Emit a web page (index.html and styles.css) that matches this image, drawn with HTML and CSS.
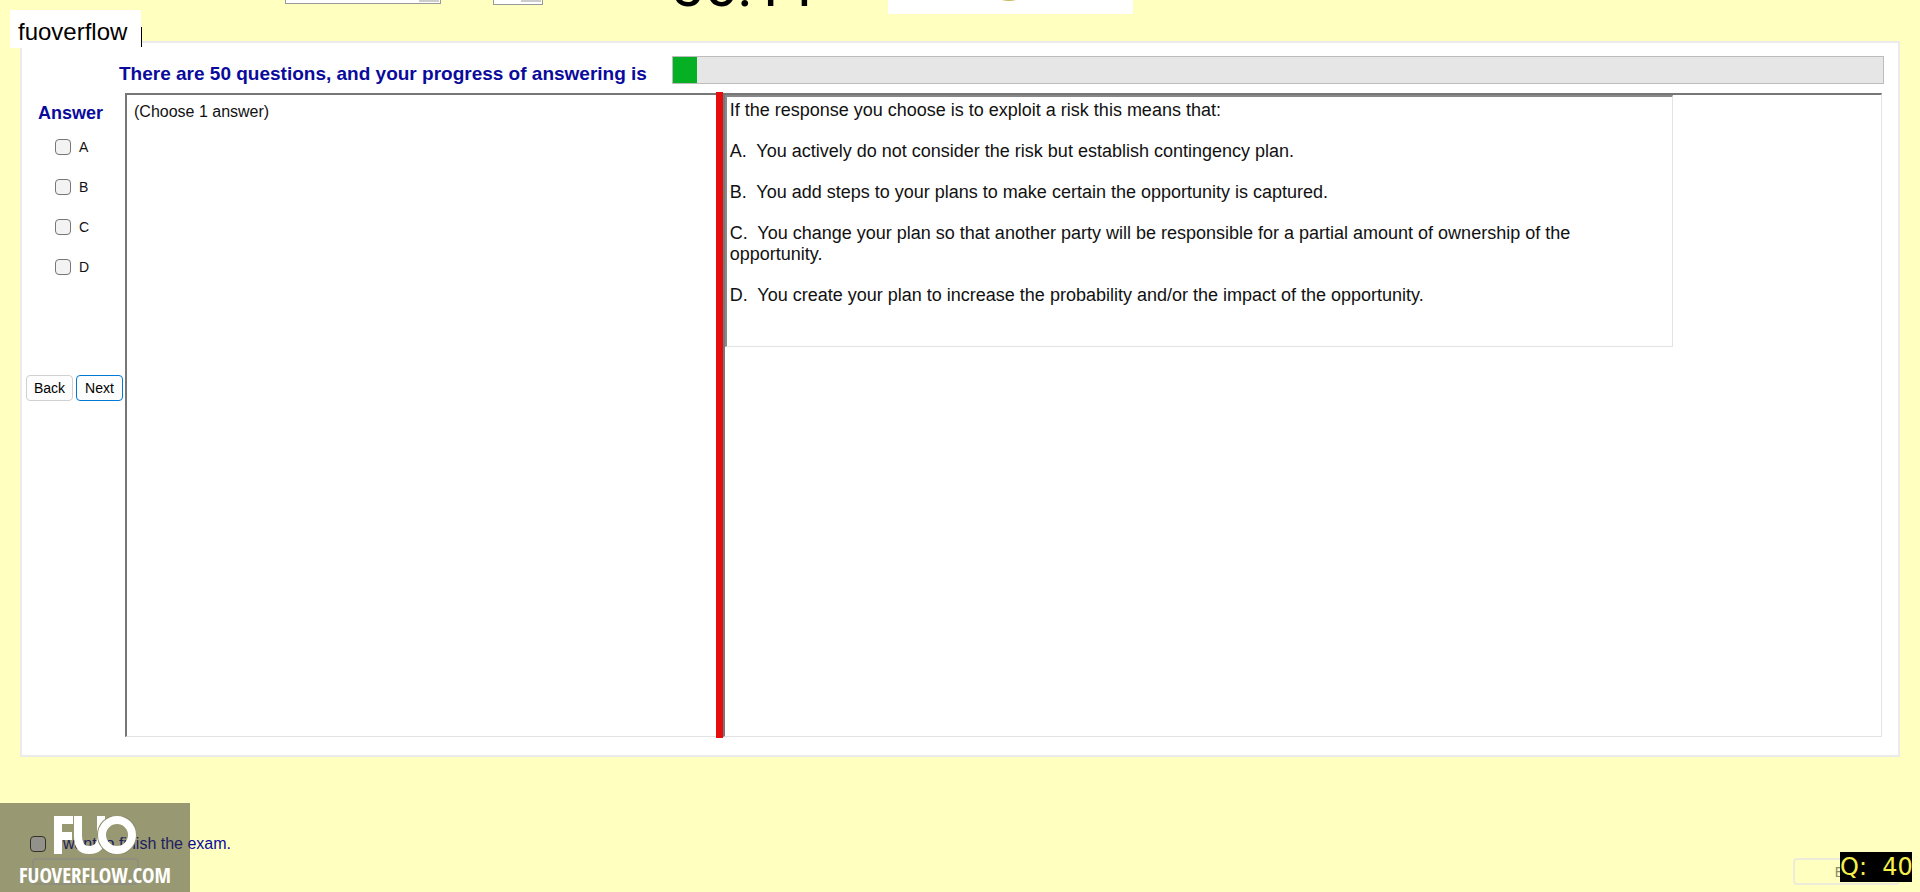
FILE: index.html
```html
<!DOCTYPE html>
<html lang="en">
<head>
  <meta charset="UTF-8">
  <title>Exam</title>
  <link rel="stylesheet" href="styles.css">
</head>
<body>

  <!-- HEADER (scrolled off, only its lower edge shows) -->
  <header class="top-bar">
    <select class="font-select" aria-label="Font"><option></option></select>
    <select class="size-select" aria-label="Size"><option></option></select>
    <div class="timer"><span>56:11</span></div>
    <div class="logo-box">
      <svg width="36" height="4" viewBox="0 0 36 4"><ellipse cx="16" cy="-9" rx="16" ry="10" fill="#c9b95c"/></svg>
    </div>
  </header>

  <!-- EXAM PANEL -->
  <main class="panel">
    <div class="progress-row">
      <span class="progress-label" id="progressLabel">There are 50 questions, and your progress of answering is</span>
      <div class="progress" role="progressbar" aria-labelledby="progressLabel" aria-valuenow="2" aria-valuemin="0" aria-valuemax="100">
        <div class="progress-fill" style="width: 2%"></div>
      </div>
    </div>

    <div class="exam">
      <form class="answers">
        <h2>Answer</h2>
        <label><input type="checkbox" name="answer" value="A">A</label>
        <label><input type="checkbox" name="answer" value="B">B</label>
        <label><input type="checkbox" name="answer" value="C">C</label>
        <label><input type="checkbox" name="answer" value="D">D</label>
        <div class="nav">
          <button type="button">Back</button>
          <button type="button" class="next">Next</button>
        </div>
      </form>

      <section class="choose">(Choose 1 answer)</section>
      <div class="splitter"></div>
      <section class="question">
        <div class="question-text">
          <p>If the response you choose is to exploit a risk this means that:</p>
          <p>A.&nbsp; You actively do not consider the risk but establish contingency plan.</p>
          <p>B.&nbsp; You add steps to your plans to make certain the opportunity is captured.</p>
          <p>C.&nbsp; You change your plan so that another party will be responsible for a partial amount of ownership of the opportunity.</p>
          <p>D.&nbsp; You create your plan to increase the probability and/or the impact of the opportunity.</p>
        </div>
      </section>
    </div>
  </main>

  <!-- FOOTER -->
  <footer class="bottom-bar">
    <div class="finish">
      <label><input type="checkbox" name="finish">I want to finish the exam.</label>
      <button type="button" class="finish-btn" aria-label="Finish" disabled></button>
    </div>
    <button type="button" class="exit-btn" disabled>Exit</button>
  </footer>

  <!-- OVERLAYS -->
  <div class="name-tag">fuoverflow</div>
  <div class="watermark">
    <svg width="82" height="38" viewBox="0 0 82 38" fill="none" stroke="#fff" stroke-width="8">
      <path d="M4 38V4H19M4 20H18"/>
      <path d="M24 0V20Q24 34 35 34Q47 34 47 22V0"/>
      <circle cx="63" cy="19" r="19" stroke="#8b8b68" stroke-width="2"/>
      <circle cx="63" cy="19" r="15"/>
    </svg>
    <span>FUOVERFLOW.COM</span>
  </div>
  <div class="counter">Q:&nbsp; 40</div>

</body>
</html>
```
FILE: styles.css
```css
* {
  box-sizing: border-box;
}

body {
  margin: 0;
  min-height: 100vh;
  display: flex;
  flex-direction: column;
  position: relative;
  overflow: hidden;
  background: #ffffc0;
  color: #111;
  font-family: "Liberation Sans", Arial, sans-serif;
  font-size: 16px;
}

input[type="checkbox"] {
  appearance: none;
  width: 16px;
  height: 16px;
  margin: 0;
  background: #f3f3f3;
  border: 1px solid #777;
  border-radius: 4px;
}

/* header */
.top-bar {
  display: flex;
  align-items: flex-start;
  height: 41px;
  padding-left: 285px;
}

.top-bar select {
  appearance: none;
  border: 1px solid #999;
  border-top: none;
  border-radius: 0;
  background: linear-gradient(#ccc, #ccc) right 1px top / 20px 2px no-repeat #fff;
}

.font-select {
  width: 156px;
  height: 4px;
}

.size-select {
  width: 50px;
  height: 5px;
  margin-left: 52px;
}

.timer {
  display: flex;
  align-items: flex-end;
  width: 154px;
  height: 20px;
  margin-left: 127px;
  overflow: hidden;
  color: #000;
  font-family: Roboto, sans-serif;
  font-size: 60px;
  line-height: 68px;
}

.logo-box {
  display: flex;
  justify-content: center;
  width: 245px;
  height: 14px;
  margin-left: 64px;
  background: #fff;
}

/* exam panel */
.panel {
  display: flex;
  flex: 1;
  flex-direction: column;
  margin: 0 20px;
  padding: 13px 14px 18px 4px;
  background: #fff;
  border: 2px solid #ebebeb;
}

.progress-row {
  display: flex;
  gap: 20px;
  margin-left: 93px;
}

.progress-label {
  width: 533px;
  padding-top: 8px;
  color: #0a0a9c;
  font-size: 19px;
  font-weight: bold;
  line-height: 20px;
  white-space: nowrap;
}

.progress {
  flex: 1;
  height: 28px;
  background: #e6e6e6;
  border: 1px solid #bcbcbc;
}

.progress-fill {
  height: 100%;
  background: #06b025;
}

.exam {
  display: grid;
  flex: 1;
  grid-template-columns: 99px 590fr 7px 1158fr;
  margin: 9px 2px 0 0;
}

.answers {
  display: flex;
  flex-direction: column;
}

.answers h2 {
  margin: 10px 0 14px 12px;
  color: #0a0a9c;
  font-size: 18px;
  line-height: 20px;
}

.answers label {
  display: flex;
  align-items: center;
  gap: 8px;
  height: 20px;
  margin: 0 0 20px 29px;
  font-size: 14px;
}

.nav {
  display: flex;
  gap: 3px;
  margin-top: 78px;
}

.nav button {
  width: 47px;
  height: 26px;
  padding: 0;
  background: #fdfdfd;
  border: 1px solid #d0d0d0;
  border-radius: 4px;
  font-family: inherit;
  font-size: 14px;
}

.nav .next {
  border-color: #0078d4;
}

.choose {
  padding: 7px;
  border: 1px solid #e3e3e3;
  border-top: 2px solid #777;
  border-left: 2px solid #777;
  border-right: none;
  line-height: 20px;
}

.splitter {
  margin: -1px 0;
  background: #e50d0d;
}

.question {
  border: 1px solid #e3e3e3;
  border-top: 2px solid #777;
  border-left: 2px solid #777;
}

.question-text {
  display: flex;
  flex-direction: column;
  gap: 20px;
  width: 82%;
  padding: 3px 60px 40px 3px;
  border: 1px solid #e3e3e3;
  border-top: 2px solid #888;
  border-left: 2px solid #888;
  font-size: 18px;
  line-height: 21px;
}

.question-text p {
  margin: 0;
}

/* footer */
.bottom-bar {
  display: flex;
  justify-content: space-between;
  align-items: flex-end;
  padding: 77px 20px 7px 30px;
}

.finish label {
  display: flex;
  align-items: center;
  gap: 8px;
  color: #0a0a9c;
  line-height: 20px;
}

.finish input {
  border-color: #333;
}

.finish-btn,
.exit-btn {
  display: block;
  width: 107px;
  height: 27px;
  background: transparent;
  border: 2px solid #ececd8;
  border-radius: 4px;
  color: #8a8a68;
  font-family: inherit;
  font-size: 14px;
}

.finish-btn {
  margin: 4px 0 0 2px;
}

/* overlays */
.name-tag {
  position: absolute;
  left: 10px;
  top: 10px;
  padding: 11px 14px 6px 8px;
  background: #fff;
  color: #000;
  font-size: 24px;
  line-height: 21px;
}

.name-tag::after {
  content: "";
  position: absolute;
  right: -1px;
  bottom: 1px;
  width: 1px;
  height: 20px;
  background: #000;
}

.watermark {
  position: absolute;
  left: 0;
  bottom: 0;
  display: flex;
  flex-direction: column;
  align-items: center;
  width: 190px;
  height: 89px;
  padding-top: 13px;
  background: rgba(50, 50, 35, 0.5);
  color: #fff;
  font-family: "Open Sans Condensed", "Liberation Sans Narrow", "DejaVu Sans Condensed", sans-serif;
  font-size: 21px;
  font-weight: bold;
  line-height: 42px;
}

.watermark svg {
  flex-shrink: 0;
}

.counter {
  position: absolute;
  right: 8px;
  bottom: 10px;
  width: 72px;
  height: 30px;
  background: #000;
  color: #f5ee4c;
  font-family: "DejaVu Sans", sans-serif;
  font-size: 24px;
  line-height: 30px;
  white-space: nowrap;
}
```
